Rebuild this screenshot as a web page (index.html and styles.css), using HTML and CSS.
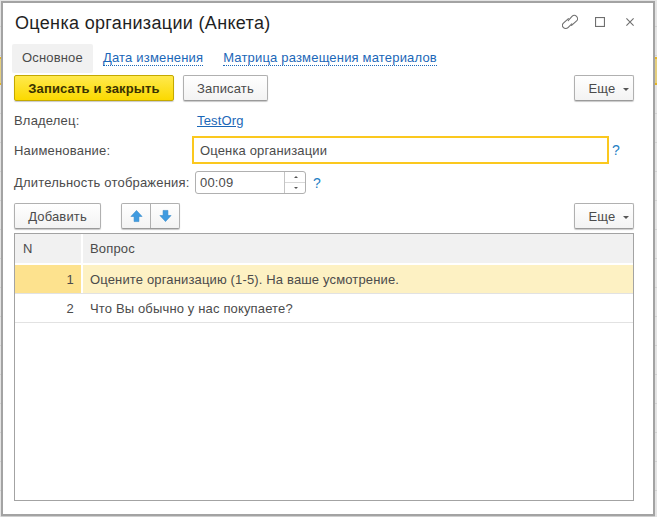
FILE: index.html
```html
<!DOCTYPE html>
<html lang="ru">
<head>
<meta charset="utf-8">
<title>Оценка организации (Анкета)</title>
<link rel="stylesheet" href="styles.css">
</head>
<body>
<div class="window">
  <header class="titlebar">
    <h1 class="title">Оценка организации (Анкета)</h1>
    <div class="win-tools">
      <svg class="ico" width="16" height="16" viewBox="0 0 16 16" fill="none" stroke="#6f6f6f" stroke-width="1.1" stroke-linecap="round"><path d="M6.2 6.6 L10 2.4 a3.2 3.2 0 0 1 4.6 4.5 L9.6 11.4"/><path d="M9.8 9.8 L6 13.6 a3.2 3.2 0 0 1 -4.6 -4.5 L6.4 4.6"/></svg>
      <svg class="ico" width="10" height="10" viewBox="0 0 10 10" fill="none" stroke="#6f6f6f" stroke-width="1.1"><rect x=".55" y=".55" width="8.9" height="8.9"/></svg>
      <svg class="ico" width="8" height="8" viewBox="0 0 8 8" fill="none" stroke="#6f6f6f" stroke-width="1.1"><path d="M.4 .4 L7.6 7.6 M7.6 .4 L.4 7.6"/></svg>
    </div>
  </header>
  <nav class="tabs">
    <span class="tab">Основное</span>
    <a class="tab-link">Дата изменения</a>
    <a class="tab-link">Матрица размещения материалов</a>
  </nav>
  <div class="toolbar">
    <button class="btn btn-primary">Записать и закрыть</button>
    <button class="btn btn-save">Записать</button>
    <button class="btn btn-more">Еще<i class="caret"></i></button>
  </div>
  <div class="field owner">
    <span class="label">Владелец:</span>
    <a class="ref">TestOrg</a>
  </div>
  <div class="field name">
    <span class="label">Наименование:</span>
    <div class="input-focus">Оценка организации</div>
    <span class="help">?</span>
  </div>
  <div class="field duration">
    <span class="label">Длительность отображения:</span>
    <div class="spin">
      <span class="spin-val">00:09</span>
      <span class="spin-btns"><i class="sp-up"></i><i class="sp-down"></i></span>
    </div>
    <span class="help">?</span>
  </div>
  <div class="toolbar table-tools">
    <button class="btn btn-add">Добавить</button>
    <div class="arrows">
      <button class="arrow"><svg width="13" height="14" viewBox="0 0 14 14"><path d="M7 1 L13 7.5 H9.6 V13 H4.4 V7.5 H1 Z" fill="#3f9be0" stroke="#2f86c8" stroke-width=".6"/></svg></button>
      <button class="arrow"><svg width="13" height="14" viewBox="0 0 14 14"><path d="M7 13 L13 6.5 H9.6 V1 H4.4 V6.5 H1 Z" fill="#3f9be0" stroke="#2f86c8" stroke-width=".6"/></svg></button>
    </div>
    <button class="btn btn-more">Еще<i class="caret"></i></button>
  </div>
  <div class="grid">
    <div class="row head"><div class="c1 left">N</div><div class="c2">Вопрос</div></div>
    <div class="row sel"><div class="c1">1</div><div class="c2">Оцените организацию (1-5). На ваше усмотрение.</div></div>
    <div class="row"><div class="c1">2</div><div class="c2">Что Вы обычно у нас покупаете?</div></div>
  </div>
</div>
</body>
</html>
```
FILE: styles.css
```css
* { box-sizing: border-box; }
html, body { height: 100%; }
body {
  margin: 0;
  padding: 1px 2px 1px 1px;
  font: 13px "Liberation Sans", Arial, sans-serif;
  letter-spacing: .15px;
  color: #4b4b4b;
  overflow: hidden;
  background-color: #e4e4e4;
  background-image:
    linear-gradient(#e6b422 0 2px, #e5cf7f 2px 26px, #e6b422 26px 28px),
    linear-gradient(#e4e4e4 0 28px, #d2d2d2 28px 29px);
  background-size: 100% 28px, 100% 29px;
  background-position: 0 57px, 0 -2px;
  background-repeat: no-repeat, repeat;
}
.window {
  width: 654px;
  height: 515px;
  background: #fff;
  border: 2px solid #a3a3a3;
  box-shadow: 0 1px 0 #cfcfcf;
  padding: 0 19px 13px 11px;
  display: flex;
  flex-direction: column;
}
.titlebar {
  display: flex;
  align-items: center;
  justify-content: space-between;
  height: 40px;
  padding: 0 0 0 1px;
}
.title {
  margin: 0;
  font-size: 18px;
  font-weight: 400;
  letter-spacing: .33px;
  color: #1f1f1f;
}
.win-tools {
  display: flex;
  align-items: center;
  margin-bottom: 2px;
}
.ico { display: block; }
.ico + .ico { margin-left: 17px; }
.ico + .ico + .ico { margin-left: 21px; }
.tabs {
  display: flex;
  align-items: center;
  height: 29px;
  margin: 1px 0 0 -2px;
}
.tab {
  width: 81px;
  height: 29px;
  line-height: 28px;
  text-align: center;
  background: #f1f1f1;
  border-radius: 2px;
  margin-right: 10px;
}
.tab-link {
  color: #1b67b8;
  border-bottom: 1px dotted #1b67b8;
  line-height: 14px;
  letter-spacing: .18px;
  margin-right: 20px;
}
.toolbar {
  display: flex;
  align-items: center;
  height: 26px;
  margin-top: 2px;
}
.btn {
  height: 26px;
  padding: 0;
  font: inherit;
  letter-spacing: inherit;
  color: #4b4b4b;
  border: 1px solid #b0b0b0;
  border-bottom-color: #9a9a9a;
  border-radius: 2px;
  background: linear-gradient(#fff, #f3f3f3);
  box-shadow: 0 1px 1px #c8c8c8;
}
.btn-primary {
  width: 160px;
  font-weight: 700;
  color: #3a3200;
  background: linear-gradient(#ffe94d, #fbd900);
  border-color: #c4a900;
}
.btn-save { width: 85px; margin-left: 9px; }
.btn-add { width: 87px; }
.btn-more {
  width: 60px;
  margin-left: auto;
  padding-left: 10px;
  display: flex;
  align-items: center;
  justify-content: center;
  gap: 8px;
}
.caret {
  width: 0;
  height: 0;
  margin-top: 2px;
  border: 3px solid transparent;
  border-top: 3px solid #555;
  border-bottom: 0;
}
.field {
  display: flex;
  align-items: center;
}
.owner { height: 20px; margin-top: 9px; }
.owner .label { width: 183px; }
.label { width: 178px; flex: none; letter-spacing: .19px; }
.ref { color: #1b67b8; text-decoration: underline; }
.name { height: 28px; margin-top: 6px; }
.input-focus {
  width: 417px;
  height: 28px;
  line-height: 25px;
  padding-left: 6px;
  border: 2px solid #fbc81e;
}
.help { color: #1f7fc4; font-size: 14px; margin-left: 3px; }
.duration { height: 23px; margin-top: 7px; }
.duration .label { width: 181px; }
.spin {
  width: 111px;
  height: 23px;
  display: flex;
  border: 1px solid #b0b0b0;
  border-radius: 3px;
}
.spin-val { flex: 1; line-height: 22px; padding-left: 4px; }
.spin-btns {
  width: 21px;
  border-left: 1px solid #c4c4c4;
  display: flex;
  flex-direction: column;
  align-items: center;
}
.spin-btns i {
  flex: 1;
  width: 100%;
  position: relative;
}
.sp-up { border-bottom: 1px solid #d8d8d8; }
.sp-up::after, .sp-down::after {
  content: "";
  position: absolute;
  left: 9px;
  top: 4px;
  border: 2px solid transparent;
}
.sp-up::after { border-top: 0; border-bottom: 2px solid #555; }
.sp-down::after { border-bottom: 0; border-top: 2px solid #555; }
.duration .help { margin-left: 7px; }
.table-tools { margin-top: 9px; }
.arrows {
  display: flex;
  width: 59px;
  height: 26px;
  margin-left: 20px;
  border: 1px solid #b0b0b0;
  border-bottom-color: #9a9a9a;
  border-radius: 2px;
  box-shadow: 0 1px 1px #c8c8c8;
  background: linear-gradient(#fff, #f3f3f3);
}
.arrow {
  flex: 1;
  padding: 0;
  border: 0;
  background: none;
  display: flex;
  align-items: center;
  justify-content: center;
}
.arrow + .arrow { border-left: 1px solid #b0b0b0; }
.grid {
  flex: 1;
  margin-top: 4px;
  border: 1px solid #a3a3a3;
  font-size: 13px;
}
.row {
  display: flex;
  height: 29px;
  border-bottom: 1px solid #e2e2e2;
}
.c1 {
  width: 68px;
  flex: none;
  text-align: right;
  padding: 1px 7px 0 0;
  line-height: 28px;
  border-right: 2px solid transparent;
}
.c2 {
  flex: 1;
  padding: 1px 0 0 7px;
  line-height: 28px;
}
.head {
  height: 31px;
  border-bottom: 2px solid #fff;
}
.head .c1, .head .c2 { background: #f1f1f1; }
.head .c1.left { text-align: left; padding-left: 8px; }
.sel .c1 { background: #fde28e; }
.head .c1, .sel .c1 { border-right-color: #fff; }
.sel .c2 { background: #fdf1c3; }
```
